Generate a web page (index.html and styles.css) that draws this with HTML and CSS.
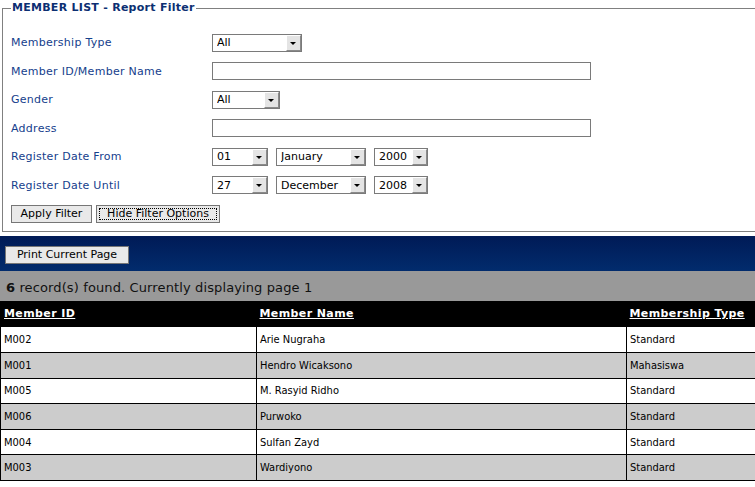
FILE: index.html
```html
<!DOCTYPE html>
<html>
<head>
<meta charset="utf-8">
<title>Member List - Report</title>
<link rel="stylesheet" href="styles.css">
</head>
<body>
<fieldset class="filter">
  <legend class="filter-title">MEMBER LIST - Report Filter</legend>
  <div class="form-grid">
    <label class="lbl">Membership Type</label>
    <div class="ctl"><span class="sel w90"><select><option>All</option></select></span></div>

    <label class="lbl">Member ID/Member Name</label>
    <div class="ctl"><input class="txt" type="text"></div>

    <label class="lbl">Gender</label>
    <div class="ctl"><span class="sel w68"><select><option>All</option></select></span></div>

    <label class="lbl">Address</label>
    <div class="ctl"><input class="txt" type="text"></div>

    <label class="lbl">Register Date From</label>
    <div class="ctl dates">
      <span class="sel w56"><select><option>01</option></select></span>
      <span class="sel w90"><select><option>January</option></select></span>
      <span class="sel w54"><select><option>2000</option></select></span>
    </div>

    <label class="lbl">Register Date Until</label>
    <div class="ctl dates">
      <span class="sel w56"><select><option>27</option></select></span>
      <span class="sel w90"><select><option>December</option></select></span>
      <span class="sel w54"><select><option>2008</option></select></span>
    </div>
  </div>
  <div class="actions">
    <button class="btn btn-apply" type="button">Apply Filter</button>
    <button class="btn btn-hide" type="button">Hide Filter Options</button>
  </div>
</fieldset>

<div class="print-bar">
  <button class="btn btn-print" type="button">Print Current Page</button>
</div>

<div class="info-bar"><b>6</b> record(s) found. Currently displaying page 1</div>

<table class="list">
  <colgroup>
    <col class="c1"><col class="c2"><col class="c3">
  </colgroup>
  <thead>
    <tr><th>Member ID</th><th>Member Name</th><th>Membership Type</th></tr>
  </thead>
  <tbody>
    <tr><td>M002</td><td>Arie Nugraha</td><td>Standard</td></tr>
    <tr class="alt"><td>M001</td><td>Hendro Wicaksono</td><td>Mahasiswa</td></tr>
    <tr><td>M005</td><td>M. Rasyid Ridho</td><td>Standard</td></tr>
    <tr class="alt"><td>M006</td><td>Purwoko</td><td>Standard</td></tr>
    <tr><td>M004</td><td>Sulfan Zayd</td><td>Standard</td></tr>
    <tr class="alt"><td>M003</td><td>Wardiyono</td><td>Standard</td></tr>
  </tbody>
</table>
</body>
</html>
```
FILE: styles.css
```css
html, body {
  margin: 0;
  padding: 0;
  background: #fff;
}
body {
  font-family: "DejaVu Sans", Verdana, sans-serif;
  font-size: 11px;
  color: #000;
}

.filter {
  margin: 0 0 0 2px;
  padding: 17px 0 8px 8px;
  border-color: #808080;
  border-width: 1px 0 1px 1px;
  border-style: solid;
  box-shadow: inset 1px 1px 0 #fff;
}
.filter-title {
  padding: 0 1px;
  margin-left: 0;
  color: #0c2f72;
  font-weight: bold;
  font-size: 11px;
  line-height: 16px;
  letter-spacing: 0.27px;
}

.form-grid {
  display: grid;
  grid-template-columns: 201px 1fr;
  grid-auto-rows: 19px;
  row-gap: 9.6px;
  align-items: center;
}
.lbl {
  color: #15408c;
  letter-spacing: 0.27px;
}
.ctl {
  display: flex;
  align-items: center;
}
.dates {
  gap: 8px;
}

.sel {
  position: relative;
  display: inline-block;
  height: 18px;
}
.sel select {
  -webkit-appearance: none;
  appearance: none;
  width: 100%;
  height: 18px;
  margin: 0;
  padding: 0 18px 0 4px;
  border: 1px solid #7a7a7a;
  border-radius: 0;
  background: #fff;
  font-family: "DejaVu Sans", Verdana, sans-serif;
  font-size: 11px;
  color: #000;
  box-sizing: border-box;
}
.sel::before {
  content: "";
  position: absolute;
  top: 1px;
  right: 1px;
  width: 13px;
  height: 14px;
  background: #e4e4e4;
  border-top: 1px solid #fff;
  border-left: 1px solid #fff;
  border-right: 1px solid #8a8a8a;
  border-bottom: 1px solid #8a8a8a;
  pointer-events: none;
}
.sel::after {
  content: "";
  position: absolute;
  top: 8px;
  right: 6px;
  border-left: 3px solid transparent;
  border-right: 3px solid transparent;
  border-top: 3px solid #000;
  pointer-events: none;
}
.w90 { width: 90px; }
.w68 { width: 68px; }
.w56 { width: 56px; }
.w54 { width: 54px; }

.txt {
  width: 379px;
  height: 18px;
  margin: 0;
  padding: 0 3px;
  border: 1px solid #7a7a7a;
  border-radius: 0;
  box-sizing: border-box;
  font-family: "DejaVu Sans", Verdana, sans-serif;
  font-size: 11px;
}

.actions {
  display: flex;
  gap: 4px;
  margin-top: 10px;
}
.btn {
  height: 18px;
  margin: 0;
  padding: 0 6px;
  border: 1px solid #767676;
  border-radius: 0;
  background: #e9e9e9;
  font-family: "DejaVu Sans", Verdana, sans-serif;
  font-size: 11px;
  color: #000;
  line-height: 16px;
  white-space: nowrap;
}
.btn-apply { width: 81px; }
.btn-hide {
  width: 124px;
  outline: 1px dotted #000;
  outline-offset: -4px;
}

.print-bar {
  margin-top: 4px;
  height: 35px;
  padding: 10px 0 0 5px;
  box-sizing: border-box;
  background: linear-gradient(#001a56, #022c6d);
}
.btn-print {
  width: 124px;
}

.info-bar {
  height: 30px;
  padding: 9px 0 0 6px;
  box-sizing: border-box;
  background: #999;
  font-size: 13px;
  letter-spacing: 0.12px;
  color: #111;
}

.list {
  width: 100%;
  border-collapse: collapse;
  table-layout: fixed;
  border-left: 1px solid #000;
}
.c1 { width: 256px; }
.c2 { width: 370px; }
.list th {
  height: 26px;
  padding: 0 3px;
  background: #000;
  color: #fff;
  text-align: left;
  font-weight: bold;
  letter-spacing: 0.4px;
  text-decoration: underline;
  box-sizing: border-box;
}
.list td {
  height: 25.6px;
  padding: 0 3px;
  border-top: 1px solid #000;
  border-left: 1px solid #000;
  box-sizing: border-box;
  white-space: nowrap;
  font-family: "DejaVu Sans Condensed", "DejaVu Sans", sans-serif;
  font-stretch: condensed;
}
.list td:first-child { border-left: none; }
.list tbody tr { background: #fff; }
.list tbody tr.alt { background: #ccc; }
.list tbody tr:last-child td { border-bottom: 1px solid #000; }
```
